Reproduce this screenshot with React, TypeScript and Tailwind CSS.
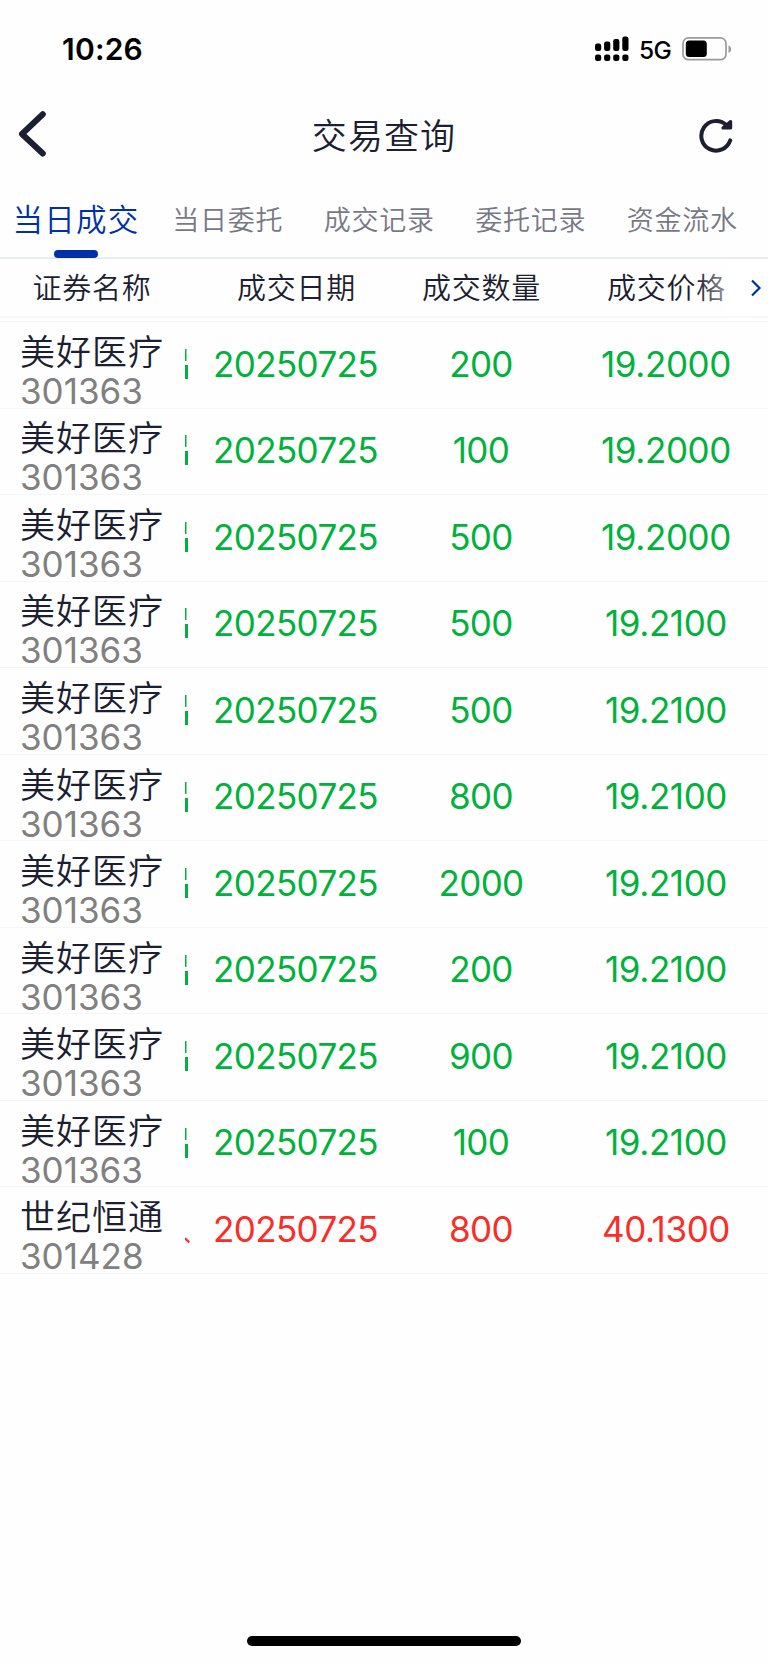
import React from 'react';

interface Trade {
  name: string;
  code: string;
  date: string;
  amount: string;
  price: string;
  side: 'buy' | 'sell';
}

const sell = (amount: string, price: string): Trade => ({
  name: '美好医疗',
  code: '301363',
  date: '20250725',
  amount,
  price,
  side: 'sell',
});

const trades: Trade[] = [
  sell('200', '19.2000'),
  sell('100', '19.2000'),
  sell('500', '19.2000'),
  sell('500', '19.2100'),
  sell('500', '19.2100'),
  sell('800', '19.2100'),
  sell('2000', '19.2100'),
  sell('200', '19.2100'),
  sell('900', '19.2100'),
  sell('100', '19.2100'),
  { name: '世纪恒通', code: '301428', date: '20250725', amount: '800', price: '40.1300', side: 'buy' },
];

const tabs = ['当日委托', '成交记录', '委托记录', '资金流水'];

const StatusBar: React.FC = () => (
  <div className="flex h-[98px] items-center justify-between pr-[36px] pl-[62px] text-black">
    <span className="text-[30px] leading-[30px] font-semibold tracking-[0.2px]">10:26</span>
    <div className="flex items-center">
      <svg className="h-[26px] w-[36px]" viewBox="0 0 36 26">
        {[7.5, 5.5, 3, 0.5].map((top, i) => (
          <g key={top}>
            <rect x={1 + i * 9.1} y={top} width="6.2" height={15 - top} rx="2.2" />
            <rect x={1 + i * 9.1} y="18.5" width="6.2" height="6.5" rx="2.2" />
          </g>
        ))}
      </svg>
      <span className="mt-[2px] ml-[9px] w-[34px] text-[24.5px] leading-[30px] font-[450] tracking-[-0.6px] whitespace-nowrap">5G</span>
      <svg className="ml-[9px] h-[26px] w-[50px]" viewBox="0 0 50 26">
        <rect x="1" y="1.9" width="43" height="21.8" rx="5.5" fill="none" stroke="#9b9b9b" strokeWidth="1.7" />
        <rect x="3.8" y="4.6" width="21" height="16.3" rx="3.5" />
        <path d="M46.5 9.5c3.6 1.2 3.6 6.2 0 7.4z" fill="#9b9b9b" />
      </svg>
    </div>
  </div>
);

const TitleBar: React.FC = () => (
  <header className="flex h-[76px] items-center justify-between pr-[34px] pl-[18px] text-[#1c1e32]">
    <svg className="mb-[5px] h-[48px] w-[30px]" viewBox="0 0 30 48" fill="none" stroke="currentColor" strokeWidth="6" strokeLinecap="round" strokeLinejoin="round">
      <path d="M24.8 4.3 4 24 24.8 43.5" />
    </svg>
    <h1 className="ml-[22px] text-[35px] leading-[40px] font-[350] tracking-[1.1px]">交易查询</h1>
    <svg className="h-[36px] w-[36px]" viewBox="0 0 36 36" fill="none" stroke="currentColor" strokeWidth="4" strokeLinecap="round" strokeLinejoin="round">
      <path d="M32.2 22.4A14.8 14.8 0 1 1 28 6.8" />
      <path d="M32.6 3.6v6.4h-7.6l3.5-3z" fill="currentColor" strokeWidth="3.2" />
    </svg>
  </header>
);

const Tabs: React.FC = () => (
  <nav className="flex h-[85px] border-b-2 border-[#e9ecee] text-[#787885]">
    <div className="flex w-[152px] flex-col items-center text-[#0030a8]">
      <span className="mt-[26px] h-[40px] text-[30.5px] leading-[40px] font-[350] tracking-[1.3px] whitespace-nowrap">当日成交</span>
      <span className="mt-[10px] h-[8px] w-[44px] shrink-0 rounded-full bg-[#0030a8]" />
    </div>
    {tabs.map((tab) => (
      <span key={tab} className="mt-[27px] w-[151.5px] text-center text-[27px] leading-[40px] font-[350] tracking-[0.8px] whitespace-nowrap">
        {tab}
      </span>
    ))}
  </nav>
);

const TableHead: React.FC = () => (
  <div className="relative mb-[3px] flex h-[59px] items-center border-b-2 border-[#f7f8f9] pt-[3px] text-[29px] font-[350] tracking-[0.8px] text-[#1c1e32]">
    <span className="w-[184px] shrink-0 text-center">证券名称</span>
    <span className="w-[225px] shrink-0 text-center">成交日期</span>
    <span className="w-[145px] shrink-0 text-center">成交数量</span>
    <span className="w-[225px] shrink-0 text-center">成交价格</span>
    {/* fade that hints at further columns */}
    <div className="absolute top-0 right-0 flex h-full w-[72px] items-center justify-end bg-linear-to-r from-transparent to-white to-80% pr-[6px]">
      <svg className="h-[18px] w-[12px]" viewBox="0 0 12 18" fill="none" stroke="#0030a8" strokeWidth="2.2">
        <path d="m2 1.5 7.5 7.5L2 16.5" />
      </svg>
    </div>
  </div>
);

/* the sliver of the scrolled-away column next to the name */
const ClippedCell: React.FC<{ side: Trade['side'] }> = ({ side }) => (
  <svg className="mb-[2px] h-[32px] w-[6px] shrink-0 overflow-visible" viewBox="0 0 6 32" fill="currentColor">
    {side === 'sell' ? (
      <>
        <rect x="0" y="1" width="1.5" height="12" />
        <rect x="0" y="17" width="3" height="14" />
      </>
    ) : (
      <path d="M0 25 .8 24.5 5 28.5 3.6 30.3 0 27z" />
    )}
  </svg>
);

const TradeRow: React.FC<{ trade: Trade }> = ({ trade }) => (
  <div
    className={`flex h-[86.55px] items-center border-b-[1.5px] border-[#f5f6f7] text-[35px] font-[380] ${
      trade.side === 'sell' ? 'text-[#00b23c]' : 'text-[#fa2d28]'
    }`}
  >
    <div className="w-[185px] shrink-0 pt-[12px] pl-[20px]">
      <div className="h-[41px] leading-[40px] font-[350] tracking-[1px] text-[#1c1e32]">{trade.name}</div>
      <div className="h-[37px] leading-[37px] text-[#808080]">{trade.code}</div>
    </div>
    <ClippedCell side={trade.side} />
    <span className="mb-[2px] w-[209px] shrink-0 text-center tracking-[-0.6px]">{trade.date}</span>
    <span className="mb-[2px] w-[162px] shrink-0 text-center tracking-[-0.6px]">{trade.amount}</span>
    <span className="mb-[2px] w-[208px] shrink-0 text-center tracking-[-0.4px]">{trade.price}</span>
  </div>
);

export default function App() {
  return (
    <div className="flex h-[1663px] w-[768px] flex-col overflow-hidden bg-[#fefefe] font-['Inter','Noto_Sans_CJK_SC',sans-serif]">
      <StatusBar />
      <TitleBar />
      <Tabs />
      <TableHead />
      <main className="border-t border-[#f3f4f5]">
        {trades.map((trade, i) => (
          <TradeRow key={i} trade={trade} />
        ))}
      </main>
      <div className="mx-auto mt-auto mb-[17px] h-[10px] w-[274px] rounded-full bg-black" />
    </div>
  );
}
